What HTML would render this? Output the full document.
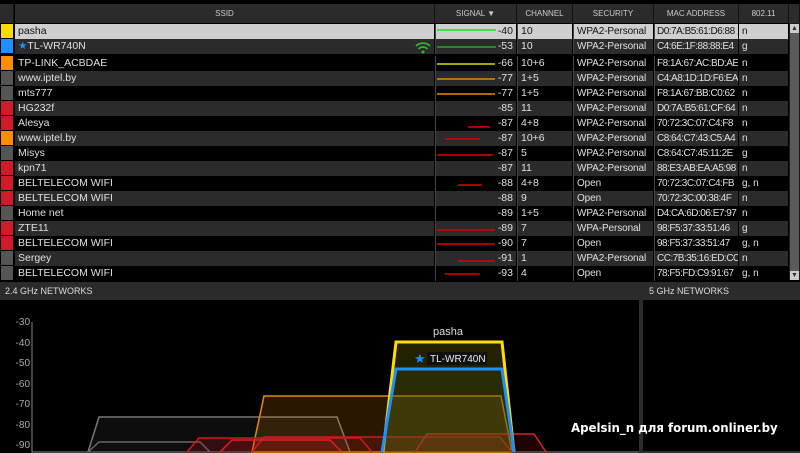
<!DOCTYPE html>
<html><head><meta charset="utf-8"><style>
*{margin:0;padding:0;box-sizing:border-box}
body{width:800px;height:453px;background:#000;overflow:hidden;font-family:"Liberation Sans",sans-serif;font-size:10px;color:#e0e0e0;position:relative}
.hdr{position:absolute;top:4px;height:19px;background:#2b2b2b;color:#ccc;font-size:8px;text-align:center;line-height:19px;border-right:1px solid #111}
.row{position:absolute;left:0;width:788px;height:15px}
.row div{position:absolute;top:0;height:15px;line-height:15px;white-space:nowrap;overflow:hidden}
.sw{left:1px;width:12px;height:14px!important}
.c1{left:15px;width:419px;padding-left:3px;font-size:10.5px}
.c2{left:435px;width:81px;text-align:right;padding-right:3px;font-size:10.5px}
.c3{left:517px;width:55px;padding-left:3px;font-size:10.5px}
.c4{left:573px;width:80px;padding-left:3px;letter-spacing:-0.1px}
.c5{left:654px;width:84px;padding-left:2px;letter-spacing:-0.5px}
.c6{left:739px;width:49px;padding-left:3px}
.g .c1,.g .c2,.g .c3,.g .c4,.g .c5,.g .c6{background:#2b2b2b}
.b .c1,.b .c2,.b .c3,.b .c4,.b .c5,.b .c6{background:#000}
.sel div{background:#cfcfcf;color:#111}
.row div.c2,.row div.c3,.row div.c4,.row div.c5{border-left:1px solid #444}
</style></head><body>
<div class="hdr" style="left:0;width:14px"></div>
<div class="hdr" style="left:15px;width:420px">SSID</div>
<div class="hdr" style="left:435px;width:82px">SIGNAL ▼</div>
<div class="hdr" style="left:517px;width:56px">CHANNEL</div>
<div class="hdr" style="left:573px;width:81px">SECURITY</div>
<div class="hdr" style="left:654px;width:85px">MAC ADDRESS</div>
<div class="hdr" style="left:739px;width:50px">802.11</div>
<div class="hdr" style="left:789px;width:11px"></div>
<div style="position:absolute;left:789px;top:23px;width:11px;height:257px;background:#1a1a1a"></div>
<div style="position:absolute;left:790px;top:33px;width:9px;height:238px;background:#5a5a5a"></div>
<div style="position:absolute;left:790px;top:24px;width:9px;height:9px;background:#ccc;color:#333;font-size:7px;text-align:center;line-height:9px">▲</div>
<div style="position:absolute;left:790px;top:271px;width:9px;height:9px;background:#ccc;color:#333;font-size:7px;text-align:center;line-height:9px">▼</div>

<div class="row sel" style="top:24px"><div class="sw" style="background:#ffd800"></div><div class="c1">pasha</div><div class="c2">-40</div><div class="c3">10</div><div class="c4">WPA2-Personal</div><div class="c5">D0:7A:B5:61:D6:88</div><div class="c6">n</div></div>
<div class="row g" style="top:39px;height:16px"><div class="sw" style="background:#1e8fff"></div><div class="c1"><span style="color:#1e8fff">★</span>TL-WR740N</div><div class="c2">-53</div><div class="c3">10</div><div class="c4">WPA2-Personal</div><div class="c5">C4:6E:1F:88:88:E4</div><div class="c6">g</div></div>
<div class="row b" style="top:56px"><div class="sw" style="background:#ff8c00"></div><div class="c1">TP-LINK_ACBDAE</div><div class="c2">-66</div><div class="c3">10+6</div><div class="c4">WPA2-Personal</div><div class="c5">F8:1A:67:AC:BD:AE</div><div class="c6">n</div></div>
<div class="row g" style="top:71px"><div class="sw" style="background:#555"></div><div class="c1">www.iptel.by</div><div class="c2">-77</div><div class="c3">1+5</div><div class="c4">WPA2-Personal</div><div class="c5">C4:A8:1D:1D:F6:EA</div><div class="c6">n</div></div>
<div class="row b" style="top:86px"><div class="sw" style="background:#555"></div><div class="c1">mts777</div><div class="c2">-77</div><div class="c3">1+5</div><div class="c4">WPA2-Personal</div><div class="c5">F8:1A:67:BB:C0:62</div><div class="c6">n</div></div>
<div class="row g" style="top:101px"><div class="sw" style="background:#d01a2a"></div><div class="c1">HG232f</div><div class="c2">-85</div><div class="c3">11</div><div class="c4">WPA2-Personal</div><div class="c5">D0:7A:B5:61:CF:64</div><div class="c6">n</div></div>
<div class="row b" style="top:116px"><div class="sw" style="background:#d01a2a"></div><div class="c1">Alesya</div><div class="c2">-87</div><div class="c3">4+8</div><div class="c4">WPA2-Personal</div><div class="c5">70:72:3C:07:C4:F8</div><div class="c6">n</div></div>
<div class="row g" style="top:131px"><div class="sw" style="background:#ff8c00"></div><div class="c1">www.iptel.by</div><div class="c2">-87</div><div class="c3">10+6</div><div class="c4">WPA2-Personal</div><div class="c5">C8:64:C7:43:C5:A4</div><div class="c6">n</div></div>
<div class="row b" style="top:146px"><div class="sw" style="background:#555"></div><div class="c1">Misys</div><div class="c2">-87</div><div class="c3">5</div><div class="c4">WPA2-Personal</div><div class="c5">C8:64:C7:45:11:2E</div><div class="c6">g</div></div>
<div class="row g" style="top:161px"><div class="sw" style="background:#d01a2a"></div><div class="c1">kpn71</div><div class="c2">-87</div><div class="c3">11</div><div class="c4">WPA2-Personal</div><div class="c5">88:E3:AB:EA:A5:98</div><div class="c6">n</div></div>
<div class="row b" style="top:176px"><div class="sw" style="background:#d01a2a"></div><div class="c1">BELTELECOM WIFI</div><div class="c2">-88</div><div class="c3">4+8</div><div class="c4">Open</div><div class="c5">70:72:3C:07:C4:FB</div><div class="c6">g, n</div></div>
<div class="row g" style="top:191px"><div class="sw" style="background:#d01a2a"></div><div class="c1">BELTELECOM WIFI</div><div class="c2">-88</div><div class="c3">9</div><div class="c4">Open</div><div class="c5">70:72:3C:00:38:4F</div><div class="c6">n</div></div>
<div class="row b" style="top:206px"><div class="sw" style="background:#555"></div><div class="c1">Home net</div><div class="c2">-89</div><div class="c3">1+5</div><div class="c4">WPA2-Personal</div><div class="c5">D4:CA:6D:06:E7:97</div><div class="c6">n</div></div>
<div class="row g" style="top:221px"><div class="sw" style="background:#d01a2a"></div><div class="c1">ZTE11</div><div class="c2">-89</div><div class="c3">7</div><div class="c4">WPA-Personal</div><div class="c5">98:F5:37:33:51:46</div><div class="c6">g</div></div>
<div class="row b" style="top:236px"><div class="sw" style="background:#d01a2a"></div><div class="c1">BELTELECOM WIFI</div><div class="c2">-90</div><div class="c3">7</div><div class="c4">Open</div><div class="c5">98:F5:37:33:51:47</div><div class="c6">g, n</div></div>
<div class="row g" style="top:251px"><div class="sw" style="background:#555"></div><div class="c1">Sergey</div><div class="c2">-91</div><div class="c3">1</div><div class="c4">WPA2-Personal</div><div class="c5">CC:7B:35:16:ED:CC</div><div class="c6">n</div></div>
<div class="row b" style="top:266px;height:13px"><div class="sw" style="background:#555"></div><div class="c1">BELTELECOM WIFI</div><div class="c2">-93</div><div class="c3">4</div><div class="c4">Open</div><div class="c5">78:F5:FD:C9:91:67</div><div class="c6">g, n</div></div>

<svg style="position:absolute;left:0;top:0" width="800" height="453">
<g stroke-width="1.5" fill="none">
<path d="M437 30H496" stroke="#22dd22"/>
<path d="M437 47H496" stroke="#22aa22"/>
<path d="M437 64H495" stroke="#dddd00"/>
<path d="M437 79H495" stroke="#ee8800"/>
<path d="M437 94H495" stroke="#ee8800"/>
<path d="M468 127H490" stroke="#dd0000"/>
<path d="M445 139H480" stroke="#dd0000"/>
<path d="M437 155H493" stroke="#dd0000"/>
<path d="M458 185H482" stroke="#dd0000"/>
<path d="M437 230H495" stroke="#dd0000"/>
<path d="M437 244H495" stroke="#dd0000"/>
<path d="M458 261H495" stroke="#dd0000"/>
<path d="M445 274H480" stroke="#dd0000"/>
</g>
<g fill="none" stroke="#2fb82f" stroke-width="1.8">
<path d="M416 46a10 10 0 0 1 14 0"/><path d="M418.5 49a6 6 0 0 1 9 0"/></g>
<circle cx="423" cy="52" r="1.5" fill="#2fb82f"/>
</svg>

<div style="position:absolute;left:0;top:282px;width:639px;height:18px;background:#2b2b2b;font-size:9px;line-height:18px;padding-left:5px;color:#ddd">2.4 GHz NETWORKS</div>
<div style="position:absolute;left:643px;top:282px;width:157px;height:18px;background:#2b2b2b;font-size:9px;line-height:18px;padding-left:6px;color:#ddd">5 GHz NETWORKS</div>
<div style="position:absolute;left:639px;top:282px;width:4px;height:171px;background:#2b2b2b"></div>

<svg style="position:absolute;left:0;top:300px" width="639" height="153" font-family="Liberation Sans" font-size="10" fill="#aaa">
<path d="M32 22V152H639" stroke="#888" fill="none"/>
<g text-anchor="end"><text x="30" y="25">-30</text><text x="30" y="46">-40</text><text x="30" y="66">-50</text><text x="30" y="87">-60</text><text x="30" y="107">-70</text><text x="30" y="128">-80</text><text x="30" y="148">-90</text></g>
<path d="M88 152L99 117H337L350 152" stroke="#777" fill="rgba(90,90,90,0.15)" stroke-width="1.5"/>
<path d="M88 152L99 142H200L210 152" stroke="#666" fill="none" stroke-width="1.5"/>
<path d="M252 152L264 96H501L512 152Z" stroke="#e88a00" fill="rgba(230,130,0,0.18)" stroke-width="1.5"/>
<path d="M187 152L199 138H360L372 152M252 152L264 137H500L512 152" stroke="#cc1a22" fill="rgba(200,20,30,0.2)" stroke-width="1.5"/>
<path d="M220 152L232 140H330L342 152M415 152L427 134H534L546 152" stroke="#dd2028" fill="rgba(200,20,30,0.15)" stroke-width="1.5"/>
<path d="M383 152L396 42H502L514 152" stroke="#ffdd00" fill="rgba(120,110,0,0.3)" stroke-width="3"/>
<path d="M382 152L396 69H502L514 152" stroke="#1e8fff" fill="rgba(60,80,30,0.25)" stroke-width="3"/>
<text x="448" y="35" text-anchor="middle" fill="#ddd" font-size="11">pasha</text>
<rect x="427" y="52" width="60" height="13" fill="#111"/>
<text x="430" y="62" fill="#eee" font-size="10">TL-WR740N</text>
<text x="414" y="63" fill="#1e8fff" font-size="13">★</text>
</svg>
<svg style="position:absolute;left:643px;top:300px" width="157" height="153"><path d="M0 152H157" stroke="#666"/></svg>
<div style="position:absolute;left:571px;top:421px;font-family:'DejaVu Sans',sans-serif;font-weight:bold;font-size:12px;color:#fff;white-space:nowrap;transform:scaleX(0.98);transform-origin:left top">Apelsin_n для forum.onliner.by</div>
</body></html>
